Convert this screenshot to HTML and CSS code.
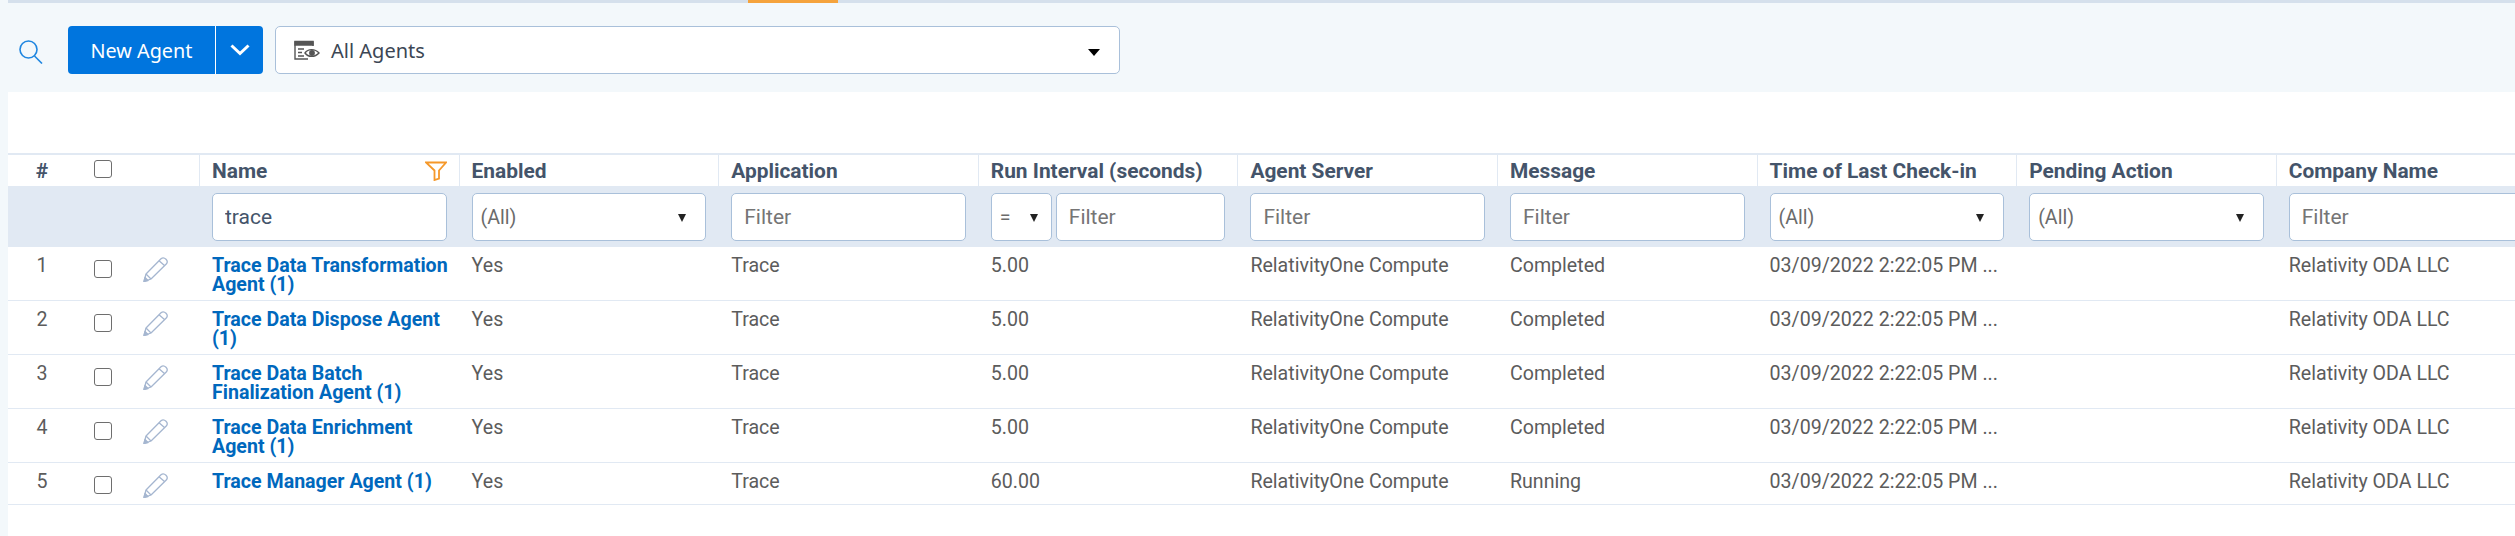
FILE: index.html
```html
<!DOCTYPE html>
<html lang="en">
<head>
    <meta charset="UTF-8">
    <title>Agents</title>
    <link rel="stylesheet" href="styles.css">
</head>
<body>
    <div class="top-line"><div class="top-tab"></div></div>

    <div class="toolbar">
        <svg class="search-icon" width="24" height="24" viewBox="0 0 24 24" fill="none" stroke="#1f86e0" stroke-width="1.6">
            <circle cx="9.5" cy="9.5" r="8.5"/>
            <path d="M15.5 16 L23 23.5"/>
        </svg>
        <div class="new-btn">
            <span class="new-btn-label">New Agent</span>
            <span class="new-btn-drop">
                <svg width="20" height="12" viewBox="0 0 20 12" fill="none" stroke="#fff" stroke-width="3">
                    <path d="M1.5 1.5 L10 9.5 L18.5 1.5"/>
                </svg>
            </span>
        </div>
        <div class="view-select">
            <svg width="26" height="20" viewBox="0 0 26 20" fill="none" stroke="#555" stroke-width="1.4">
                <path d="M14 19 H1 V1.500 H19 V6"/>
                <path d="M1 2 H19 V5 H1 Z" fill="#555"/>
                <path d="M4 9 H10 M4 12.500 H8 M4 16 H10"/>
                <path d="M11 13 C14 8.500 21 8.500 25 13 C21 17.500 14 17.500 11 13 Z" fill="#fff"/>
                <circle cx="18" cy="13" r="2.200" fill="#555"/>
            </svg>
            <span class="view-label">All Agents</span>
        </div>
    </div>

    <div class="panel">
        <table class="grid">
            <colgroup>
                <col class="col-num">
                <col class="col-check">
                <col class="col-edit">
                <col class="col-data" span="9">
            </colgroup>
            <thead>
                <tr class="head-row">
                    <th class="num">#</th>
                    <th class="check-cell"><input type="checkbox" class="check"></th>
                    <th class="no-line"></th>
                    <th>
                        <div class="name-head">
                            <span>Name</span>
                            <svg width="22" height="20" viewBox="0 0 22 20" fill="none" stroke="#f5982a" stroke-width="1.800">
                                <path d="M1 1.500 H21 L14 9.500 V17.500 L9.500 19 V9.500 Z"/>
                            </svg>
                        </div>
                    </th>
                    <th>Enabled</th>
                    <th>Application</th>
                    <th>Run Interval (seconds)</th>
                    <th>Agent Server</th>
                    <th>Message</th>
                    <th>Time of Last Check-in</th>
                    <th>Pending Action</th>
                    <th>Company Name</th>
                </tr>
                <tr class="filter-row">
                    <td colspan="3"></td>
                    <td><input class="filter" type="text" value="trace" placeholder="Filter"></td>
                    <td><div class="filter-sel"><select><option>(All)</option></select></div></td>
                    <td><input class="filter" type="text" placeholder="Filter"></td>
                    <td>
                        <div class="run-filter">
                            <div class="filter-sel op-sel"><select><option>=</option></select></div>
                            <input class="filter" type="text" placeholder="Filter">
                        </div>
                    </td>
                    <td><input class="filter" type="text" placeholder="Filter"></td>
                    <td><input class="filter" type="text" placeholder="Filter"></td>
                    <td><div class="filter-sel"><select><option>(All)</option></select></div></td>
                    <td><div class="filter-sel"><select><option>(All)</option></select></div></td>
                    <td><input class="filter" type="text" placeholder="Filter"></td>
                </tr>
            </thead>
            <tbody id="rows"></tbody>
        </table>
    </div>

    <template id="row-tpl">
        <tr>
            <td class="num"></td>
            <td class="check-cell"><input type="checkbox" class="check"></td>
            <td class="edit-cell">
                <svg width="25" height="25" viewBox="0 0 25 25" fill="none" stroke="#a5b6d0" stroke-width="1.300" stroke-linejoin="round">
                    <path d="M1 24.500 L3 17 L18 1.800 C19.500 0.500 21.500 0.800 23 2.200 C24.500 3.800 24.500 5.500 23.500 6.800 L8 22 Z"/>
                    <path d="M3 17 L8 22 M16 3.800 L21.500 8.500"/>
                    <path d="M1 24.500 L2 20.500 L5 23.500 Z" fill="#a5b6d0"/>
                </svg>
            </td>
            <td><a class="agent-link" href="#"></a></td>
            <td>Yes</td>
            <td>Trace</td>
            <td class="interval"></td>
            <td>RelativityOne Compute</td>
            <td class="message"></td>
            <td>03/09/2022 2:22:05 PM ...</td>
            <td></td>
            <td>Relativity ODA LLC</td>
        </tr>
    </template>

    <script>
        const agents = [
            ['Trace Data Transformation Agent (1)', '5.00', 'Completed'],
            ['Trace Data Dispose Agent (1)', '5.00', 'Completed'],
            ['Trace Data Batch Finalization Agent (1)', '5.00', 'Completed'],
            ['Trace Data Enrichment Agent (1)', '5.00', 'Completed'],
            ['Trace Manager Agent (1)', '60.00', 'Running']
        ];
        const rows = document.getElementById('rows');
        const tpl = document.getElementById('row-tpl');

        agents.forEach(function(agent, i) {
            const row = tpl.content.cloneNode(true);
            row.querySelector('.num').textContent = i + 1;
            row.querySelector('.agent-link').textContent = agent[0];
            row.querySelector('.interval').textContent = agent[1];
            row.querySelector('.message').textContent = agent[2];
            rows.appendChild(row);
        });
    </script>
</body>
</html>
```

FILE: styles.css
```css
html, body {
    margin: 0;
    padding: 0;
    height: 100%;
    overflow: hidden;
}

body {
    display: flex;
    flex-direction: column;
    background-color: #f3f8fb;
    color: #5c5c5c;
    font-family: Roboto, Arial, sans-serif;
    font-size: 19.6px;
}

.top-line {
    flex: none;
    height: 3px;
    margin-left: 8px;
    background-color: #d5e0ec;
}

.top-tab {
    width: 90px;
    height: 3px;
    margin-left: 740px;
    background-color: #f5a33c;
}

.toolbar {
    flex: none;
    display: flex;
    align-items: center;
    height: 48px;
    padding: 23px 0 18px 19px;
}

.search-icon {
    margin-right: 25px;
    margin-top: 3px;
}

.new-btn {
    display: flex;
    width: 195px;
    height: 48px;
    margin-right: 12px;
    background-color: #0075de;
    border-radius: 4px;
    color: white;
    font-family: "Noto Sans", Arial, sans-serif;
    font-size: 19.8px;
}

.new-btn-label {
    display: flex;
    align-items: center;
    justify-content: center;
    width: 147px;
    border-right: 1px solid white;
}

.new-btn-drop {
    display: flex;
    align-items: center;
    justify-content: center;
    flex: 1;
}

.view-select {
    display: flex;
    align-items: center;
    gap: 11px;
    box-sizing: border-box;
    width: 845px;
    height: 48px;
    padding-left: 18px;
    background-color: white;
    border: 1px solid #a9c0da;
    border-radius: 5px;
    color: #3c4654;
    font-family: "Noto Sans", Arial, sans-serif;
    font-size: 20px;
    position: relative;
}

.view-select::after {
    content: "";
    position: absolute;
    right: 19px;
    top: 22px;
    border-left: 6px solid transparent;
    border-right: 6px solid transparent;
    border-top: 7px solid black;
}

.panel {
    flex: 1;
    min-height: 0;
    margin-left: 8px;
    padding-top: 61px;
    background-color: white;
}

.grid {
    table-layout: fixed;
    width: 2527px;
    border-collapse: separate;
    border-spacing: 0;
    border-top: 2px solid #e1e9f3;
}

.col-num { width: 68px; }
.col-check { width: 55px; }
.col-edit { width: 68px; }
.col-data { width: 259.6px; }

.head-row th {
    height: 31px;
    padding: 0 12px;
    border-left: 1px solid #e1e9f3;
    color: #44546a;
    font-weight: 700;
    font-size: 20.9px;
    text-align: left;
    box-sizing: border-box;
    white-space: nowrap;
}

.head-row th:first-child,
.head-row .check-cell,
.head-row .no-line {
    border-left: none;
}

.head-row th.num {
    text-align: center;
    padding: 0;
}

.head-row th.check-cell {
    padding: 5px 0 0 18px;
    vertical-align: top;
}

.name-head {
    display: flex;
    justify-content: space-between;
    align-items: center;
}

.filter-row td {
    height: 61px;
    padding: 7px 12px 6px 13px;
    background-color: #e1e9f3;
    box-sizing: border-box;
}

.filter,
.filter-sel select {
    box-sizing: border-box;
    display: block;
    width: 100%;
    height: 48px;
    background-color: white;
    border: 1px solid #a9c0da;
    border-radius: 5px;
    font-family: Roboto, Arial, sans-serif;
    font-size: 21px;
    color: #44546a;
    outline: none;
}

.filter {
    padding: 0 12px;
}

.filter::placeholder {
    color: #757575;
    opacity: 1;
}

.filter-sel {
    position: relative;
}

.filter-sel select {
    appearance: none;
    padding: 0 8px;
    color: #6b6b6b;
    font-size: 19.6px;
}

.filter-sel::after {
    content: "";
    position: absolute;
    right: 20px;
    top: 21px;
    border-left: 4.5px solid transparent;
    border-right: 4.5px solid transparent;
    border-top: 8px solid #222;
    pointer-events: none;
}

.run-filter {
    display: flex;
    gap: 4px;
}

.op-sel {
    flex: 0 0 61px;
}

.op-sel::after {
    right: 14px;
}

tbody td {
    box-sizing: border-box;
    height: 42px;
    padding: 9px 12px 6px 13px;
    border-bottom: 1px solid #e1e9f3;
    line-height: 19px;
    vertical-align: top;
    white-space: nowrap;
}

tbody td:nth-child(4) {
    padding-right: 8px;
    white-space: normal;
}

tbody td.num {
    padding: 9px 0 0;
    text-align: center;
}

.agent-link {
    color: #0068bd;
    font-weight: 700;
    font-size: 19.6px;
    text-decoration: none;
}

.check-cell {
    padding: 0 0 0 18px;
}

tbody td.check-cell {
    padding: 13px 0 0 18px;
}

tbody td.edit-cell {
    padding: 10px 0 0 12px;
}

.check {
    appearance: none;
    display: block;
    width: 18px;
    height: 18px;
    margin: 0;
    border: 1.5px solid #6e6e6e;
    border-radius: 3px;
    background-color: white;
}
```
